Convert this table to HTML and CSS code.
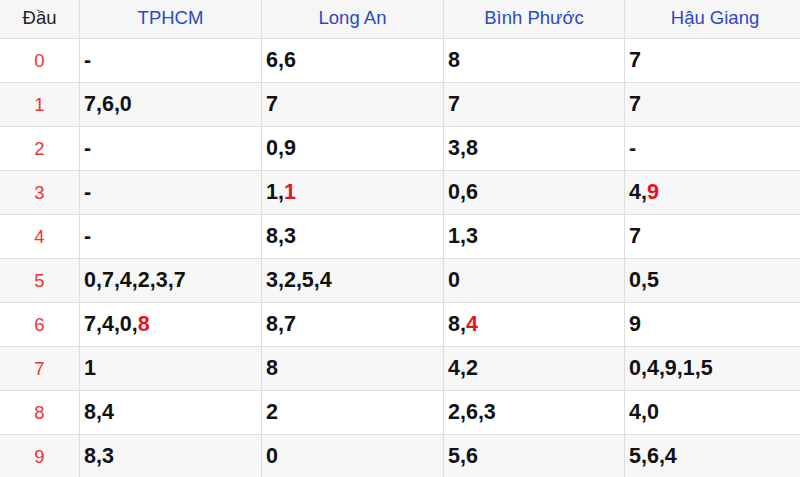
FILE: index.html
```html
<!DOCTYPE html>
<html lang="vi">
<head>
<meta charset="utf-8">
<title>Lô tô đầu</title>
<link rel="stylesheet" href="styles.css">
</head>
<body>
<table class="loto">
  <colgroup>
    <col class="c-head">
    <col class="c-prov">
    <col class="c-prov">
    <col class="c-prov3">
    <col class="c-prov3">
  </colgroup>
  <thead>
    <tr>
      <th class="dau-h">Đầu</th>
      <th>TPHCM</th>
      <th>Long An</th>
      <th>Bình Phước</th>
      <th>Hậu Giang</th>
    </tr>
  </thead>
  <tbody>
    <tr><td class="dau">0</td><td>-</td><td>6,6</td><td>8</td><td>7</td></tr>
    <tr><td class="dau">1</td><td>7,6,0</td><td>7</td><td>7</td><td>7</td></tr>
    <tr><td class="dau">2</td><td>-</td><td>0,9</td><td>3,8</td><td>-</td></tr>
    <tr><td class="dau">3</td><td>-</td><td>1,<span class="hl">1</span></td><td>0,6</td><td>4,<span class="hl">9</span></td></tr>
    <tr><td class="dau">4</td><td>-</td><td>8,3</td><td>1,3</td><td>7</td></tr>
    <tr><td class="dau">5</td><td>0,7,4,2,3,7</td><td>3,2,5,4</td><td>0</td><td>0,5</td></tr>
    <tr><td class="dau">6</td><td>7,4,0,<span class="hl">8</span></td><td>8,7</td><td>8,<span class="hl">4</span></td><td>9</td></tr>
    <tr><td class="dau">7</td><td>1</td><td>8</td><td>4,2</td><td>0,4,9,1,5</td></tr>
    <tr><td class="dau">8</td><td>8,4</td><td>2</td><td>2,6,3</td><td>4,0</td></tr>
    <tr><td class="dau">9</td><td>8,3</td><td>0</td><td>5,6</td><td>5,6,4</td></tr>
  </tbody>
</table>
</body>
</html>
```

FILE: styles.css
```css
html, body {
  margin: 0;
  padding: 0;
  background: #ffffff;
  overflow: hidden;
}

body {
  font-family: "Liberation Sans", Arial, sans-serif;
  color: #111;
}

.loto {
  table-layout: fixed;
  border-collapse: separate;
  border-spacing: 0;
  width: 806px;
  margin: 0;
}

.c-head { width: 80px; }
.c-prov { width: 182px; }
.c-prov3 { width: 181px; }

.loto th,
.loto td {
  box-sizing: border-box;
  border-right: 1px solid #dedede;
  border-bottom: 1px solid #dedede;
  padding: 0 4px;
  vertical-align: middle;
  white-space: nowrap;
}

.loto thead th {
  height: 39px;
  background: #f6f6f6;
  font-weight: 400;
  font-size: 18.5px;
  color: #2b49c4;
  text-align: center;
  padding-bottom: 2px;
}

.loto thead th.dau-h {
  color: #222;
}

.loto tbody td {
  height: 44px;
  font-size: 21.5px;
  font-weight: 700;
  color: #111;
  text-align: left;
}

.loto tbody tr:nth-child(even) td {
  background: #f7f7f7;
}

.loto tbody td.dau {
  text-align: center;
  font-weight: 400;
  font-size: 18.5px;
  color: #ee3333;
}

.hl {
  color: #e8141a;
}
```
